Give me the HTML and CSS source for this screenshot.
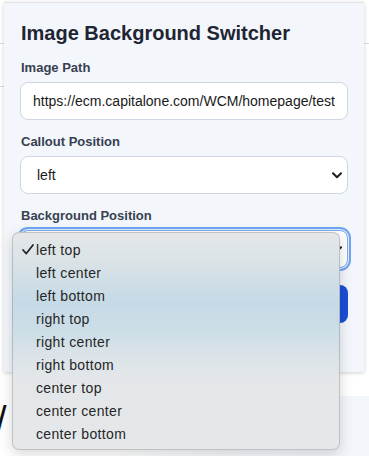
FILE: index.html
```html
<!DOCTYPE html>
<html>
<head>
<meta charset="utf-8">
<link rel="stylesheet" href="styles.css">
</head>
<body>
<div class="page">
  <div class="page-header"></div>
  <div class="page-row"></div>
  <div class="page-bottom">
    <span class="big-slash">/</span>
    <div class="page-tint"></div>
  </div>
</div>

<div class="panel">
  <h1 class="title">Image Background Switcher</h1>
  <div class="field">
    <label class="label">Image Path</label>
    <input class="control input" type="text" value="https://ecm.capitalone.com/WCM/homepage/test">
  </div>
  <div class="field">
    <label class="label">Callout Position</label>
    <div class="select-wrap">
      <select class="control select"><option>left</option></select>
      <svg class="chev" width="10" height="7" viewBox="0 0 10 7"><path d="M1 1.2 L5 5.2 L9 1.2" fill="none" stroke="#1f1f1f" stroke-width="2" stroke-linecap="round" stroke-linejoin="round"/></svg>
    </div>
  </div>
  <div class="field">
    <label class="label">Background Position</label>
    <div class="select-wrap">
      <select class="control select focused"><option>left top</option></select>
      <svg class="chev" width="10" height="7" viewBox="0 0 10 7"><path d="M1 1.2 L5 5.2 L9 1.2" fill="none" stroke="#1f1f1f" stroke-width="2" stroke-linecap="round" stroke-linejoin="round"/></svg>
    </div>
  </div>
  <button class="apply">Apply</button>
</div>

<div class="popup">
  <div class="item"><span class="mark"><svg width="12" height="11" viewBox="0 0 12 11"><path d="M1 6 L4.3 9.6 L11 1" fill="none" stroke="#222" stroke-width="1.7" stroke-linecap="round" stroke-linejoin="round"/></svg></span><span>left top</span></div>
  <div class="item"><span class="mark"></span><span>left center</span></div>
  <div class="item"><span class="mark"></span><span>left bottom</span></div>
  <div class="item"><span class="mark"></span><span>right top</span></div>
  <div class="item"><span class="mark"></span><span>right center</span></div>
  <div class="item"><span class="mark"></span><span>right bottom</span></div>
  <div class="item"><span class="mark"></span><span>center top</span></div>
  <div class="item"><span class="mark"></span><span>center center</span></div>
  <div class="item"><span class="mark"></span><span>center bottom</span></div>
</div>
</body>
</html>
```

FILE: styles.css
```css
* { box-sizing: border-box; }
html, body {
  margin: 0;
  padding: 0;
}
body {
  width: 369px;
  height: 456px;
  overflow: hidden;
  position: relative;
  background: #ffffff;
  font-family: "Liberation Sans", Arial, sans-serif;
}

/* underlying page */
.page {
  height: 456px;
  display: flex;
  flex-direction: column;
}
.page-header {
  height: 44px;
  border-bottom: 1px solid #dcdcdc;
  flex: none;
}
.page-row {
  height: 43px;
  width: 10px;
  border-bottom: 1px solid #dcdcdc;
  flex: none;
}
.page-bottom {
  flex: 1;
  display: flex;
  align-items: flex-end;
}
.big-slash {
  font-size: 38px;
  line-height: 40px;
  color: #111;
  margin-left: -4px;
  margin-bottom: 16px;
  font-family: "Liberation Sans", Arial, sans-serif;
}
.page-tint {
  margin-left: auto;
  width: 254px;
  height: 60px;
  background: linear-gradient(90deg, #ffffff, #f6f8fc 40%, #f2f5fa);
}

/* panel overlay */
.panel {
  position: absolute;
  left: 4px;
  top: 2px;
  width: 360px;
  height: 370px;
  background: #f3f6fb;
  border-top: 1px solid #e2e4e8;
  box-shadow: 0 1px 4px rgba(0, 0, 0, 0.18);
  padding: 18px 16px 0 16px;
  display: flex;
  flex-direction: column;
  gap: 14px;
}
.title {
  margin: 0 0 1px 1px;
  font-size: 20px;
  line-height: 24px;
  font-weight: 700;
  color: #1e2533;
}
.field {
  display: flex;
  flex-direction: column;
}
.label {
  font-size: 13px;
  line-height: 16px;
  font-weight: 700;
  color: #374151;
  margin: 0 0 6px 1px;
}
.control {
  width: 328px;
  height: 38px;
  border: 1px solid #cfd6e0;
  border-radius: 8px;
  background: #ffffff;
  font-family: "Liberation Sans", Arial, sans-serif;
  font-size: 14px;
  color: #1a1a1a;
  margin: 0;
  outline: none;
}
.input {
  padding: 0 12px;
}
.select-wrap {
  position: relative;
  width: 328px;
}
.select {
  -webkit-appearance: none;
  appearance: none;
  padding: 0 30px 0 16px;
  display: block;
}
.select.focused {
  border-color: #7aaaf0;
  box-shadow: 0 0 0 1px #e4eefc, 0 0 0 3px #6fa5f2;
}
.chev {
  position: absolute;
  right: 6px;
  top: 16px;
}
.apply {
  margin-top: 3px;
  width: 328px;
  height: 38px;
  border: none;
  border-radius: 8px;
  background: #1a4ed8;
  color: #ffffff;
  font-family: "Liberation Sans", Arial, sans-serif;
  font-size: 14px;
  font-weight: 700;
}

/* native dropdown popup */
.popup {
  position: absolute;
  left: 12px;
  top: 232px;
  width: 328px;
  height: 218px;
  border-radius: 7px;
  border: 1px solid rgba(0, 0, 0, 0.16);
  box-shadow: 0 4px 14px rgba(0, 0, 0, 0.16);
  background: linear-gradient(180deg,
    #e4e7e9 0px,
    #dae3e6 28px,
    #c6dae6 68px,
    #cbdde7 95px,
    #dce4e8 125px,
    #e4e7ea 150px,
    #e5e8eb 218px);
  padding: 5px 0 0 8px;
  display: flex;
  flex-direction: column;
}
.item {
  display: flex;
  align-items: center;
  height: 23px;
  font-size: 14px;
  letter-spacing: 0.35px;
  color: #262626;
}
.mark {
  width: 15px;
  flex: none;
  display: flex;
  align-items: center;
  padding-left: 1px;
}
```
